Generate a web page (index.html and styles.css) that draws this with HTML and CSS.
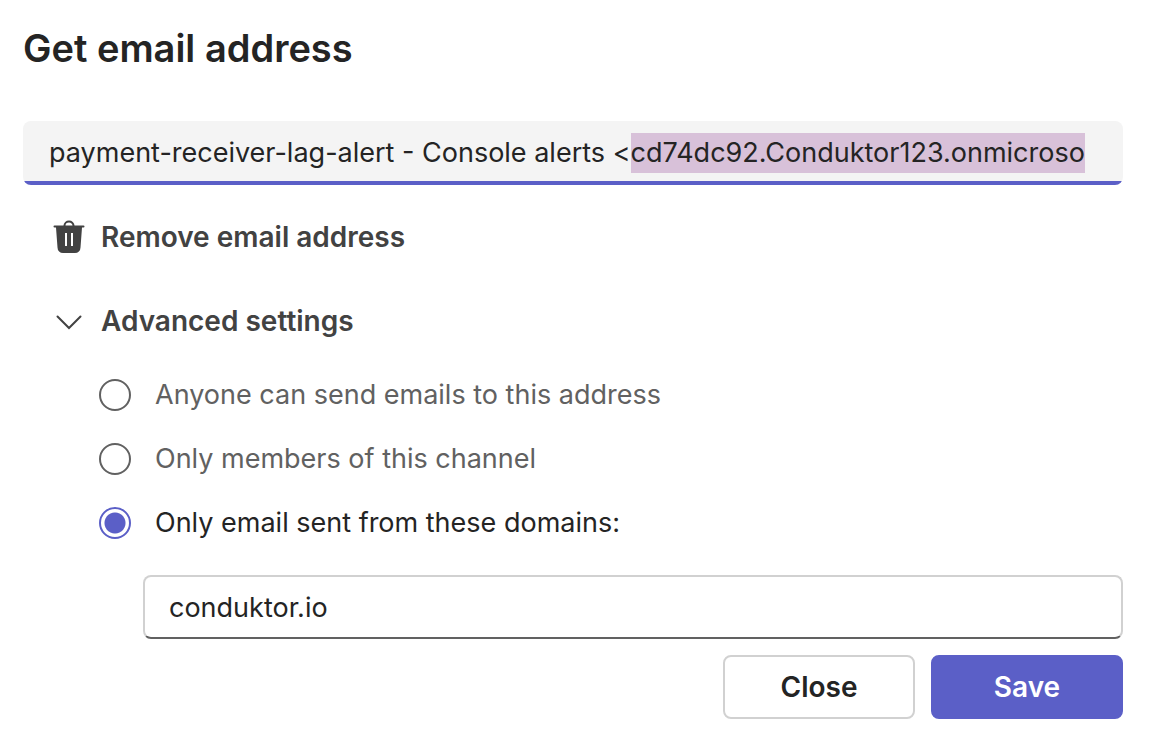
FILE: index.html
```html
<!DOCTYPE html>
<html lang="en">
<head>
<meta charset="utf-8">
<meta name="viewport" content="width=device-width, initial-scale=1">
<title>Get email address</title>
<link rel="stylesheet" href="styles.css">
</head>
<body>
<form class="dialog">
  <h1 class="title">Get email address</h1>
  <div class="address-field">
    <textarea class="address" id="address" rows="1" readonly spellcheck="false" aria-label="Channel email address">payment-receiver-lag-alert - Console alerts &lt;cd74dc92.Conduktor123.onmicroso</textarea>
  </div>
  <button class="action remove" type="button">
    <svg class="icon" viewBox="0 0 32 36" aria-hidden="true">
      <path d="M11.500 7.500V6.500a4.500 4 0 0 1 9 0v1" fill="none" stroke="currentColor" stroke-width="2"/>
      <path fill="currentColor" fill-rule="evenodd" d="M1.500 6.500h29a1 1 0 0 1 0 2H29l-1.500 20a5.500 5.500 0 0 1-5.500 5.500H10a5.500 5.500 0 0 1-5.500-5.500L3 8.500H1.500a1 1 0 0 1 0-2ZM12 14v13h2V14ZM18 14v13h2V14Z"/>
    </svg>
    Remove email address
  </button>
  <button class="action advanced" type="button" aria-expanded="true" aria-controls="settings">
    <svg class="icon" viewBox="0 0 32 36" aria-hidden="true">
      <path d="M4.500 13.500 16 25 27.500 13.500" fill="none" stroke="currentColor" stroke-width="2" stroke-linecap="round"/>
    </svg>
    Advanced settings
  </button>
  <div class="settings" id="settings" role="radiogroup" aria-label="Who can send emails">
    <label class="option"><input class="radio" type="radio" name="senders">Anyone can send emails to this address</label>
    <label class="option"><input class="radio" type="radio" name="senders">Only members of this channel</label>
    <label class="option"><input class="radio" type="radio" name="senders" checked>Only email sent from these domains:</label>
    <input class="domains" type="text" aria-label="Allowed domains" value="conduktor.io">
  </div>
  <div class="buttons">
    <button class="button" type="button">Close</button>
    <button class="button primary" type="button">Save</button>
  </div>
</form>
<script src="script.js"></script>
</body>
</html>
```
FILE: styles.css
```css
* {
  box-sizing: border-box;
}

body {
  margin: 0;
  background: #fff;
  color: #242424;
  font-family: Inter, "Liberation Sans", sans-serif;
  font-size: 27px;
  line-height: 40px;
}

button,
input,
textarea {
  font: inherit;
  color: inherit;
}

.dialog {
  display: flex;
  flex-direction: column;
  padding: 20px 31px 32px 23px;
}

.title {
  margin: 0 0 45px;
  font-size: 38px;
  font-weight: 600;
  line-height: 56px;
}

.address-field {
  overflow: hidden;
  border-radius: 8px;
  background: #f4f4f4;
}

.address {
  display: block;
  width: 100%;
  height: 64px;
  padding: 12px 26px 8px;
  border: 0;
  border-bottom: 4px solid #5b5fc7;
  background: transparent;
  outline: 0;
  overflow: hidden;
  resize: none;
  white-space: pre;
}

.address::selection {
  background: #d8c1d9;
  color: #242424;
}

.action {
  display: flex;
  align-items: center;
  gap: 16px;
  align-self: flex-start;
  padding: 0 0 0 30px;
  border: 0;
  background: transparent;
  color: #424242;
  font-size: 28px;
  font-weight: 600;
}

.remove {
  margin-top: 32px;
}

.advanced {
  margin-top: 44px;
}

.icon {
  flex: none;
  width: 32px;
  height: 36px;
}

.settings {
  display: flex;
  flex-direction: column;
  gap: 24px;
  margin-top: 34px;
  padding-left: 76px;
}

.option {
  display: flex;
  align-items: center;
  gap: 24px;
  color: #616161;
}

.option:has(:checked) {
  color: #242424;
}

.radio {
  appearance: none;
  flex: none;
  width: 32px;
  height: 32px;
  margin: 0;
  border: 2px solid #616161;
  border-radius: 50%;
}

.radio:checked {
  border-color: #5b5fc7;
  background: radial-gradient(circle, #5b5fc7 10px, transparent 11px);
}

.domains {
  height: 64px;
  margin: 8px 0 0 44px;
  padding: 0 24px;
  border: 2px solid #d1d1d1;
  border-bottom-color: #616161;
  border-radius: 8px;
  background: #fff;
}

.buttons {
  display: flex;
  justify-content: flex-end;
  gap: 16px;
  margin-top: 16px;
}

.button {
  min-width: 192px;
  height: 64px;
  border: 2px solid #d1d1d1;
  border-radius: 8px;
  background: #fff;
  font-size: 28px;
  font-weight: 600;
}

.primary {
  border-color: #5b5fc7;
  background: #5b5fc7;
  color: #fff;
}
```
FILE: script.js
```js
const address = document.getElementById("address");
address.focus();
address.setSelectionRange(address.value.indexOf("<") + 1, address.value.length, "backward");
address.scrollLeft = 0;
```
